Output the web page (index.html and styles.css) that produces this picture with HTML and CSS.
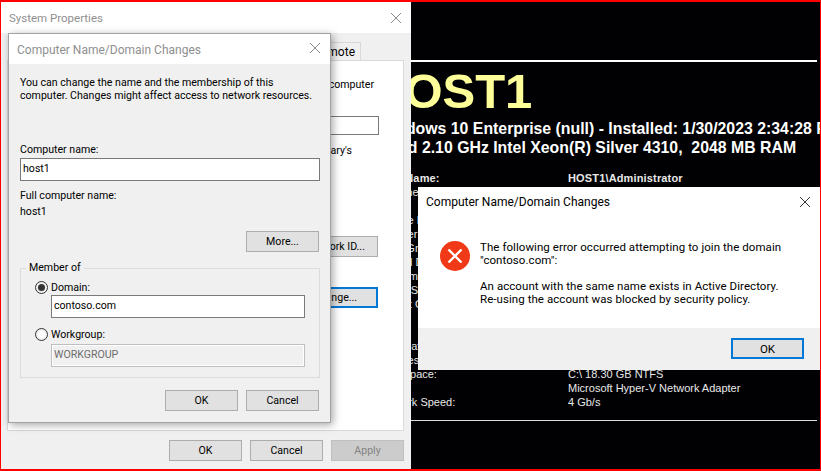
FILE: index.html
```html
<!DOCTYPE html>
<html lang="en">
<head>
    <meta charset="UTF-8">
    <meta name="viewport" content="width=device-width, initial-scale=1.0">
    <title>Computer Name/Domain Changes</title>
    <link rel="stylesheet" href="styles.css">
</head>
<body>
    <!-- desktop info behind the windows -->
    <div class="desktop">
        <div class="rule"></div>
        <div class="host">HOST1</div>
        <div class="sys-line">Windows 10 Enterprise (null) - Installed: 1/30/2023 2:34:28 PM</div>
        <div class="sys-line">Quad 2.10 GHz Intel Xeon(R) Silver 4310,  2048 MB RAM</div>
        <div class="info">
            <div class="info-row user-row"><span class="info-label">User Name:</span><span>HOST1\Administrator</span></div>
            <div class="info-row"><span class="info-label">Machine:</span><span></span></div>
            <div class="info-row"><span class="info-label"></span><span></span></div>
            <div class="info-row"><span class="info-label">Service Pack:</span><span></span></div>
            <div class="info-row"><span class="info-label">Browser:</span><span></span></div>
            <div class="info-row"><span class="info-label">Local Group:</span><span></span></div>
            <div class="info-row"><span class="info-label">Shared Disk:</span><span></span></div>
            <div class="info-row"><span class="info-label">Platform:</span><span></span></div>
            <div class="info-row"><span class="info-label">Logon Server:</span><span></span></div>
            <div class="info-row"><span class="info-label">Default Gateway:</span><span></span></div>
            <div class="info-row"><span class="info-label"></span><span></span></div>
            <div class="info-row"><span class="info-label"></span><span></span></div>
            <div class="info-row"><span class="info-label">Total Data:</span><span></span></div>
            <div class="info-row"><span class="info-label">Volumes:</span><span></span></div>
            <div class="info-row"><span class="info-label">Free Space:</span><span>C:\ 18.30 GB NTFS</span></div>
            <div class="info-row"><span class="info-label"></span><span>Microsoft Hyper-V Network Adapter</span></div>
            <div class="info-row"><span class="info-label">Network Speed:</span><span>4 Gb/s</span></div>
        </div>
        <div class="rule rule-bottom"></div>
    </div>

    <!-- System Properties -->
    <div class="window sysprops">
        <div class="titlebar inactive">
            <span>System Properties</span>
            <svg class="close" viewBox="0 0 12 12"><path d="M1 1L11 11M11 1L1 11"/></svg>
        </div>
        <div class="sysprops-body">
            <div class="tabs"><div class="tab">Remote</div></div>
            <div class="panel">
                <div class="panel-text first-text">Windows uses the following information to identify your computer<br>on the network.</div>
                <input class="field panel-field" type="text">
                <div class="panel-text mary-text">For example: "Kitchen Computer" or "Mary's<br>Computer".</div>
                <button class="btn panel-btn id-btn">Network ID...</button>
                <button class="btn focus panel-btn change-btn">Change...</button>
            </div>
            <div class="btn-row sys-buttons">
                <button class="btn">OK</button>
                <button class="btn">Cancel</button>
                <button class="btn disabled">Apply</button>
            </div>
        </div>
    </div>

    <!-- name change dialog -->
    <div class="window namedlg">
        <div class="titlebar inactive">
            <span>Computer Name/Domain Changes</span>
            <svg class="close" viewBox="0 0 12 12"><path d="M1 1L11 11M11 1L1 11"/></svg>
        </div>
        <div class="namedlg-body">
            <p class="intro">You can change the name and the membership of this<br>computer. Changes might affect access to network resources.</p>
            <label class="name-label">Computer name:</label>
            <input class="field name-field" type="text" value="host1">
            <div class="full-label">Full computer name:</div>
            <div class="full-value">host1</div>
            <div class="more-row"><button class="btn">More...</button></div>
            <fieldset class="member">
                <legend>Member of</legend>
                <div class="radio-row domain-row"><span class="radio checked"></span>Domain:</div>
                <input class="field member-field" type="text" value="contoso.com">
                <div class="radio-row group-row"><span class="radio"></span>Workgroup:</div>
                <input class="field member-field off" type="text" value="WORKGROUP" disabled>
            </fieldset>
            <div class="btn-row dlg-buttons">
                <button class="btn">OK</button>
                <button class="btn">Cancel</button>
            </div>
        </div>
    </div>

    <!-- error message -->
    <div class="window errdlg">
        <div class="titlebar">
            <span>Computer Name/Domain Changes</span>
            <svg class="close" viewBox="0 0 12 12"><path d="M1 1L11 11M11 1L1 11"/></svg>
        </div>
        <div class="err-body">
            <svg class="err-icon" viewBox="0 0 30 30">
                <circle cx="15" cy="15" r="15" fill="#f03a17"/>
                <path d="M8.5 8.5L21.5 21.5M21.5 8.5L8.5 21.5" stroke="#fff" stroke-width="2.4" fill="none"/>
            </svg>
            <div class="err-text">
                <p>The following error occurred attempting to join the domain<br>"contoso.com":</p>
                <p>An account with the same name exists in Active Directory.<br>Re-using the account was blocked by security policy.</p>
            </div>
        </div>
        <div class="err-foot"><button class="btn focus">OK</button></div>
    </div>

    <div class="frame"></div>
</body>
</html>
```

FILE: styles.css
```css
html, body {
    margin: 0;
    height: 100%;
    overflow: hidden;
    background-color: #010103;
}

body {
    font-family: Roboto, "Noto Sans", sans-serif;
    font-size: 10.6px;
    line-height: 13px;
    color: #000;
}

/* red outline of the capture */
.frame {
    position: absolute;
    inset: 0;
    border: solid #f00;
    border-width: 2px 1px 2px 1px;
    pointer-events: none;
}

/* desktop */
.desktop {
    position: absolute;
    left: 377px;
    top: 60px;
    width: 440px;
    font-family: "Liberation Sans", Arial, sans-serif;
    color: #fff;
    white-space: nowrap;
}

.rule {
    height: 2px;
    background-color: #fff;
}

.rule-bottom {
    height: 1px;
    margin-top: 11px;
    background-color: #ddd;
}

.host {
    margin: 1px 0 0 -8px;
    font-size: 49px;
    line-height: 56px;
    font-weight: bold;
    color: #ffff99;
}

.sys-line {
    font-size: 15.85px;
    line-height: 19px;
    font-weight: bold;
    white-space: pre;
}

.info {
    margin-top: 14px;
    font-size: 11px;
    color: #e8e8e8;
}

.info-row {
    display: flex;
    height: 14px;
    line-height: 14px;
}

.user-row {
    font-weight: bold;
    letter-spacing: 0.15px;
}

.info-label {
    width: 191px;
}

/* windows */
.window {
    position: absolute;
    box-sizing: border-box;
    background-color: #f0f0f0;
}

.titlebar {
    display: flex;
    align-items: center;
    justify-content: space-between;
    background-color: #fff;
    color: #000;
    font-size: 12px;
}

.titlebar span {
    padding-top: 2px;
}

.titlebar.inactive {
    color: #8f8f8f;
}

.close {
    width: 12px;
    height: 12px;
    fill: none;
    stroke: #333;
    stroke-width: 1;
}

.inactive .close {
    stroke: #8a8a8a;
}

/* inputs and buttons */
.field {
    display: block;
    box-sizing: border-box;
    margin: 0;
    padding: 0 2px 3px;
    background-color: #fff;
    border: 1px solid #7a7a7a;
    border-radius: 0;
    outline: none;
    font-family: inherit;
    font-size: inherit;
    color: #000;
}

.btn {
    box-sizing: border-box;
    width: 73px;
    height: 21px;
    padding: 0;
    background-color: #e1e1e1;
    border: 1px solid #adadad;
    border-radius: 0;
    font-family: inherit;
    font-size: inherit;
    color: #000;
}

.btn.focus {
    border: 2px solid #0078d7;
}

.btn.disabled {
    background-color: #ccc;
    border-color: #bfbfbf;
    color: #838383;
}

.btn-row {
    display: flex;
    justify-content: flex-end;
    gap: 8px;
}

/* System Properties */
.sysprops {
    left: 1px;
    top: 2px;
    width: 410px;
    height: 467px;
}

.sysprops .titlebar {
    height: 31px;
    padding: 0 9px 0 8px;
    font-size: 11.5px;
}

.sysprops-body {
    padding: 9px 7px 0 6px;
}

.tabs {
    display: flex;
    justify-content: flex-end;
    height: 18px;
    padding-right: 43px;
}

.tab {
    box-sizing: border-box;
    width: 60px;
    height: 18px;
    padding: 3px 5px 0 0;
    text-align: right;
    font-size: 12px;
    background-color: #f0f0f0;
    border: 1px solid #d9d9d9;
    border-bottom: none;
}

.panel {
    display: flex;
    flex-direction: column;
    align-items: flex-end;
    box-sizing: border-box;
    height: 371px;
    padding: 17px 24px 0 0;
    background-color: #fff;
    border: 1px solid #d9d9d9;
}

.panel-text {
    white-space: nowrap;
}

.first-text {
    margin-right: 5px;
}

.panel-field {
    width: 260px;
    height: 19px;
    margin-top: 12px;
}

.mary-text {
    margin: 9px 27px 0 0;
}

.panel-btn {
    width: 86px;
    margin-right: 1px;
    white-space: nowrap;
}

.id-btn {
    margin-top: 66px;
}

.change-btn {
    margin-top: 30px;
}

.sys-buttons {
    margin-top: 9px;
}

/* name change dialog */
.namedlg {
    left: 8px;
    top: 33px;
    width: 323px;
    height: 390px;
    border: 1px solid #a3a3a3;
    box-shadow: 2px 2px 8px rgba(0, 0, 0, 0.35);
}

.namedlg .titlebar {
    height: 30px;
    padding: 0 9px 0 8px;
}

.namedlg .close {
    margin-bottom: 2px;
}

.namedlg-body {
    padding: 0 10px 0 11px;
}

.intro {
    margin: 12px 0 0;
    white-space: nowrap;
}

.name-label {
    display: block;
    margin-top: 41px;
}

.name-field {
    width: 300px;
    height: 23px;
    margin-top: 2px;
}

.full-label {
    margin-top: 8px;
}

.full-value {
    margin-top: 3px;
}

.more-row {
    display: flex;
    justify-content: flex-end;
    margin: 13px 1px 0 0;
}

.member {
    box-sizing: border-box;
    width: 300px;
    margin: 9px 0 0;
    padding: 0 0 10px 14px;
    border: 1px solid #dcdcdc;
}

.member legend {
    margin-left: -9px;
    padding: 0 3px;
    line-height: 14px;
}

.radio-row {
    display: flex;
    align-items: center;
    gap: 3px;
    height: 13px;
}

.domain-row {
    margin-top: 6px;
}

.group-row {
    margin-top: 10px;
}

.radio {
    box-sizing: border-box;
    width: 13px;
    height: 13px;
    padding: 2px;
    background-color: #fff;
    background-clip: content-box;
    border: 1px solid #333;
    border-radius: 50%;
}

.radio.checked {
    background-color: #333;
}

.member-field {
    width: 254px;
    height: 23px;
    margin: 1px 0 0 16px;
}

.member-field.off {
    margin-top: 3px;
    background-color: #f0f0f0;
    border-color: #bfbfbf;
    box-shadow: inset 0 0 0 1px #fff;
    color: #6d6d6d;
}

.dlg-buttons {
    margin: 12px 1px 0 0;
}

/* error message */
.errdlg {
    left: 418px;
    top: 187px;
    width: 402px;
    height: 183px;
    font-size: 11.5px;
}

.errdlg .titlebar {
    height: 29px;
    padding: 0 9px 0 8px;
}

.err-body {
    display: flex;
    height: 112px;
    padding: 25px 0 0 22px;
    box-sizing: border-box;
    background-color: #fff;
}

.err-icon {
    width: 30px;
    height: 30px;
}

.err-text {
    margin: 0 0 0 10px;
    letter-spacing: 0.06px;
}

.err-text p {
    margin: 0 0 13px;
}

.err-foot {
    display: flex;
    justify-content: flex-end;
    padding: 10px 16px 0 0;
}
```
